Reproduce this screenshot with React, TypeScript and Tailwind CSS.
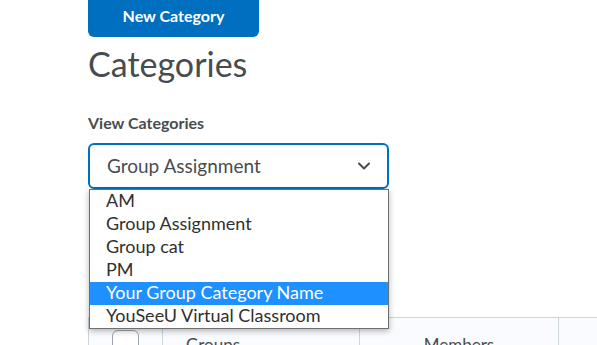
import React from "react";

const items = [
  "AM",
  "Group Assignment",
  "Group cat",
  "PM",
  "Your Group Category Name",
  "YouSeeU Virtual Classroom",
];

export default function App() {
  return (
    <div className="relative w-[597px] h-[345px] overflow-hidden bg-white font-['Lato',sans-serif] text-[#494c4e]">
      <div className="pl-[88px]">
        <button className="w-[171px] h-[37px] rounded-b-[6px] bg-[#006fbf] text-white font-bold text-[16px] leading-[19px] flex items-center justify-center pb-[7px]">
          New Category
        </button>
        <h1 className="mt-[8px] text-[34px] leading-[38px] font-normal">Categories</h1>
        <div className="mt-[30px] text-[16px] leading-[19px] font-bold">View Categories</div>
        <div className="relative mt-[11px] w-[301px] z-10">
          <div className="h-[46px] rounded-[6px] border-2 border-[#006fbf] bg-white flex items-center justify-between pl-[17px] pr-[17px]">
            <span className="text-[19px] leading-[22px]">Group Assignment</span>
            <svg width="12" height="8" viewBox="0 0 12 8" fill="none">
              <path d="M1 1.5 L6 6.5 L11 1.5" stroke="#494c4e" strokeWidth="2" strokeLinecap="round" strokeLinejoin="round" />
            </svg>
          </div>
          <div className="absolute left-[1px] top-[46px] w-[300px] border border-[#6f6f6f] bg-white shadow-[0_2px_6px_rgba(0,0,0,0.3)]">
            {items.map((t, i) => (
              <div
                key={t}
                className={
                  i === 4
                    ? "h-[23px] pl-[16px] text-[18px] leading-[20px] bg-[#1e90ff] text-white"
                    : "h-[23px] pl-[16px] text-[18px] leading-[20px] text-[#303030]"
                }
              >
                {t}
              </div>
            ))}
          </div>
        </div>
      </div>
      <div className="mt-[128px] ml-[88px] h-[40px] border-t border-l border-[#cdd5dc] bg-[#f9fbff] flex text-[17px] leading-[20px]">
        <div className="w-[74px] border-r border-[#cdd5dc] flex justify-center pt-[12px]">
          <div className="w-[27px] h-[27px] rounded-[6px] border border-[#9ea5ae] bg-white"></div>
        </div>
        <div className="w-[197px] border-r border-[#cdd5dc] pl-[23px] pt-[17px]">Groups</div>
        <div className="w-[199px] border-r border-[#cdd5dc] pt-[17px] text-center">Members</div>
        <div className="flex-1"></div>
      </div>
    </div>
  );
}
